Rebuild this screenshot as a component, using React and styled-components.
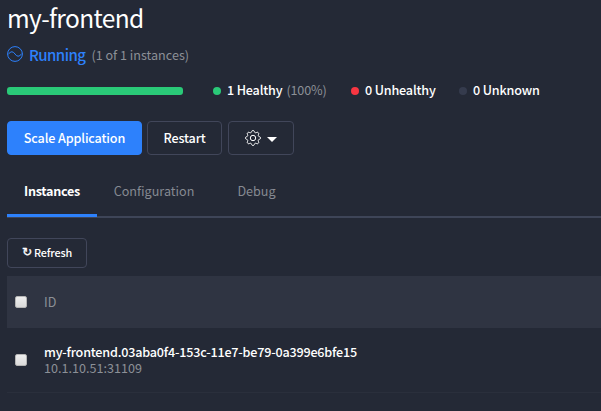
import React from "react";
import styled, { createGlobalStyle } from "styled-components";

const GlobalStyle = createGlobalStyle`
  *, *::before, *::after { box-sizing: border-box; }
  body {
    margin: 0;
    background: #242936;
    color: #fff;
    font-family: "Source Sans Pro", "Noto Sans CJK JP", sans-serif;
    font-size: 12.6px;
    overflow: hidden;
  }
`;

const Page = styled.main`
  display: flex;
  flex-direction: column;
  width: 601px;
  height: 411px;
  padding-left: 7px;
  overflow: hidden;
  white-space: nowrap;
`;

const Title = styled.h1`
  margin: 0;
  height: 37px;
  font-size: 24.5px;
  line-height: 36px;
  font-weight: 400;
  letter-spacing: -0.64px;
`;

const Status = styled.div`
  display: flex;
  align-items: center;
  height: 34px;
`;

const StatusName = styled.span`
  margin-left: 6px;
  color: #2d81fc;
  font-size: 15px;
  font-weight: 500;
  letter-spacing: -0.55px;
`;

const StatusNote = styled.span`
  margin: 1px 0 0 6px;
  color: #8c9097;
  font-size: 12.6px;
`;

const Health = styled.div`
  display: flex;
  align-items: center;
  height: 38px;
  padding-top: 1px;
`;

const HealthBar = styled.div`
  width: 176px;
  height: 8px;
  margin-right: 30px;
  border-radius: 3px;
  background: #2ac978;
`;

const HealthItem = styled.div`
  display: flex;
  align-items: center;
  width: ${(p) => p.$width}px;
  font-weight: 500;
  letter-spacing: -0.17px;
  &::before {
    content: "";
    width: 8px;
    height: 8px;
    margin-right: 6px;
    border-radius: 50%;
    background: ${(p) => p.$color};
  }
`;

const HealthLabel = styled.span`
  padding-bottom: 2px;
`;

const Percent = styled.span`
  margin-left: 4px;
  color: #8c9097;
  font-weight: 400;
`;

const Actions = styled.div`
  display: flex;
  margin-top: 12px;
`;

const Button = styled.button`
  display: flex;
  align-items: center;
  justify-content: center;
  width: ${(p) => p.$width}px;
  height: ${(p) => (p.$small ? 30 : 34)}px;
  margin: 0 ${(p) => p.$gap || 0}px 0 0;
  padding: 0 0 ${(p) => (p.$icon ? 0 : 2)}px;
  border: 1px solid ${(p) => (p.$primary ? "#2d81fc" : "#41465a")};
  border-radius: 4px;
  background: ${(p) => (p.$primary ? "#2d81fc" : "transparent")};
  color: #fff;
  font-family: inherit;
  font-size: ${(p) => (p.$small ? 10.8 : 12.6)}px;
  font-weight: 500;
  letter-spacing: -0.14px;
`;

const Caret = styled.span`
  margin: 3px 0 0 6px;
  border: 5px solid transparent;
  border-top-color: #fff;
  border-bottom: 0;
`;

const Tabs = styled.nav`
  display: flex;
  height: 62px;
  margin: 1px 0 20px;
  padding-top: 15px;
  box-shadow: inset 0 -2px #3e4558;
`;

const Tab = styled.a`
  height: 46px;
  width: ${(p) => p.$width}px;
  line-height: 39px;
  text-align: center;
  color: ${(p) => (p.$active ? "#fff" : "#868a92")};
  font-weight: ${(p) => (p.$active ? 700 : 400)};
  letter-spacing: ${(p) => (p.$active ? "-0.3px" : "0")};
  border-bottom: 3px solid ${(p) => (p.$active ? "#2d81fc" : "transparent")};
`;

const HeaderRow = styled.div`
  display: flex;
  align-items: center;
  height: 52px;
  margin-top: 8px;
  padding-left: 8px;
  background: #2f3442;
  color: #8c9097;
`;

const HeaderLabel = styled.span`
  padding-bottom: 2px;
`;

const Row = styled.div`
  display: flex;
  align-items: center;
  height: 65px;
  padding-left: 8px;
  border-bottom: 1px solid #2a2f3c;
`;

const Checkbox = styled.input.attrs({ type: "checkbox" })`
  appearance: none;
  width: 12px;
  height: 12px;
  margin: 0 17px 0 0;
  border: 1px solid #b5b5b5;
  border-radius: 2px;
  background: linear-gradient(#eee, #dadada);
`;

const Instance = styled.div`
  display: flex;
  flex-direction: column;
  line-height: 16px;
`;

const InstanceId = styled.span`
  font-weight: 500;
  letter-spacing: -0.2px;
`;

const Address = styled.span`
  color: #8c9097;
`;

const RefreshGlyph = styled.span`
  margin-right: 2px;
  font-family: "DejaVu Sans", sans-serif;
  font-size: 12px;
  -webkit-text-stroke: 0.4px #fff;
`;

const WaveIcon = () => (
  <svg width="16" height="16" viewBox="0 0 16 16" fill="none" stroke="#2d81fc">
    <circle cx="8" cy="8" r="7.4" />
    <path d="M1 8.500C2.500 6.800 3.700 5.800 5 5.800C7.700 5.800 8.300 10.200 11 10.200C12.300 10.200 13.500 9.200 15 7.500" />
  </svg>
);

const gear = Array.from({ length: 64 }, (_, i) => {
  const a = (i / 64) * Math.PI * 2;
  const r = 6.65 + 0.85 * Math.tanh(2 * Math.cos(a * 8));
  return `${(8 + r * Math.sin(a)).toFixed(2)},${(8 - r * Math.cos(a)).toFixed(2)}`;
}).join(" ");

const GearIcon = () => (
  <svg width="16" height="16" viewBox="0 0 16 16" fill="none" stroke="#fff">
    <polygon points={gear} strokeLinejoin="round" />
    <circle cx="8" cy="8" r="2.7" />
  </svg>
);

export default function App() {
  return (
    <>
      <GlobalStyle />
      <Page>
        <Title>my-frontend</Title>
        <Status>
          <WaveIcon />
          <StatusName>Running</StatusName>
          <StatusNote>(1 of 1 instances)</StatusNote>
        </Status>
        <Health>
          <HealthBar />
          <HealthItem $color="#2ac978" $width={138}><HealthLabel>1 Healthy<Percent>(100%)</Percent></HealthLabel></HealthItem>
          <HealthItem $color="#f83642" $width={108}><HealthLabel>0 Unhealthy</HealthLabel></HealthItem>
          <HealthItem $color="#353b4d" $width={90}><HealthLabel>0 Unknown</HealthLabel></HealthItem>
        </Health>
        <Actions>
          <Button $primary $width={135} $gap={5}>Scale Application</Button>
          <Button $width={75} $gap={6}>Restart</Button>
          <Button $icon $width={66} aria-label="Settings"><GearIcon /><Caret /></Button>
        </Actions>
        <Tabs>
          <Tab $active $width={90}>Instances</Tab>
          <Tab $width={114}>Configuration</Tab>
          <Tab $width={91}>Debug</Tab>
        </Tabs>
        <Button $small $width={80}><RefreshGlyph>↻</RefreshGlyph>Refresh</Button>
        <HeaderRow><Checkbox /><HeaderLabel>ID</HeaderLabel></HeaderRow>
        <Row>
          <Checkbox />
          <Instance>
            <InstanceId>my-frontend.03aba0f4-153c-11e7-be79-0a399e6bfe15</InstanceId>
            <Address>10.1.10.51:31109</Address>
          </Instance>
        </Row>
      </Page>
    </>
  );
}
